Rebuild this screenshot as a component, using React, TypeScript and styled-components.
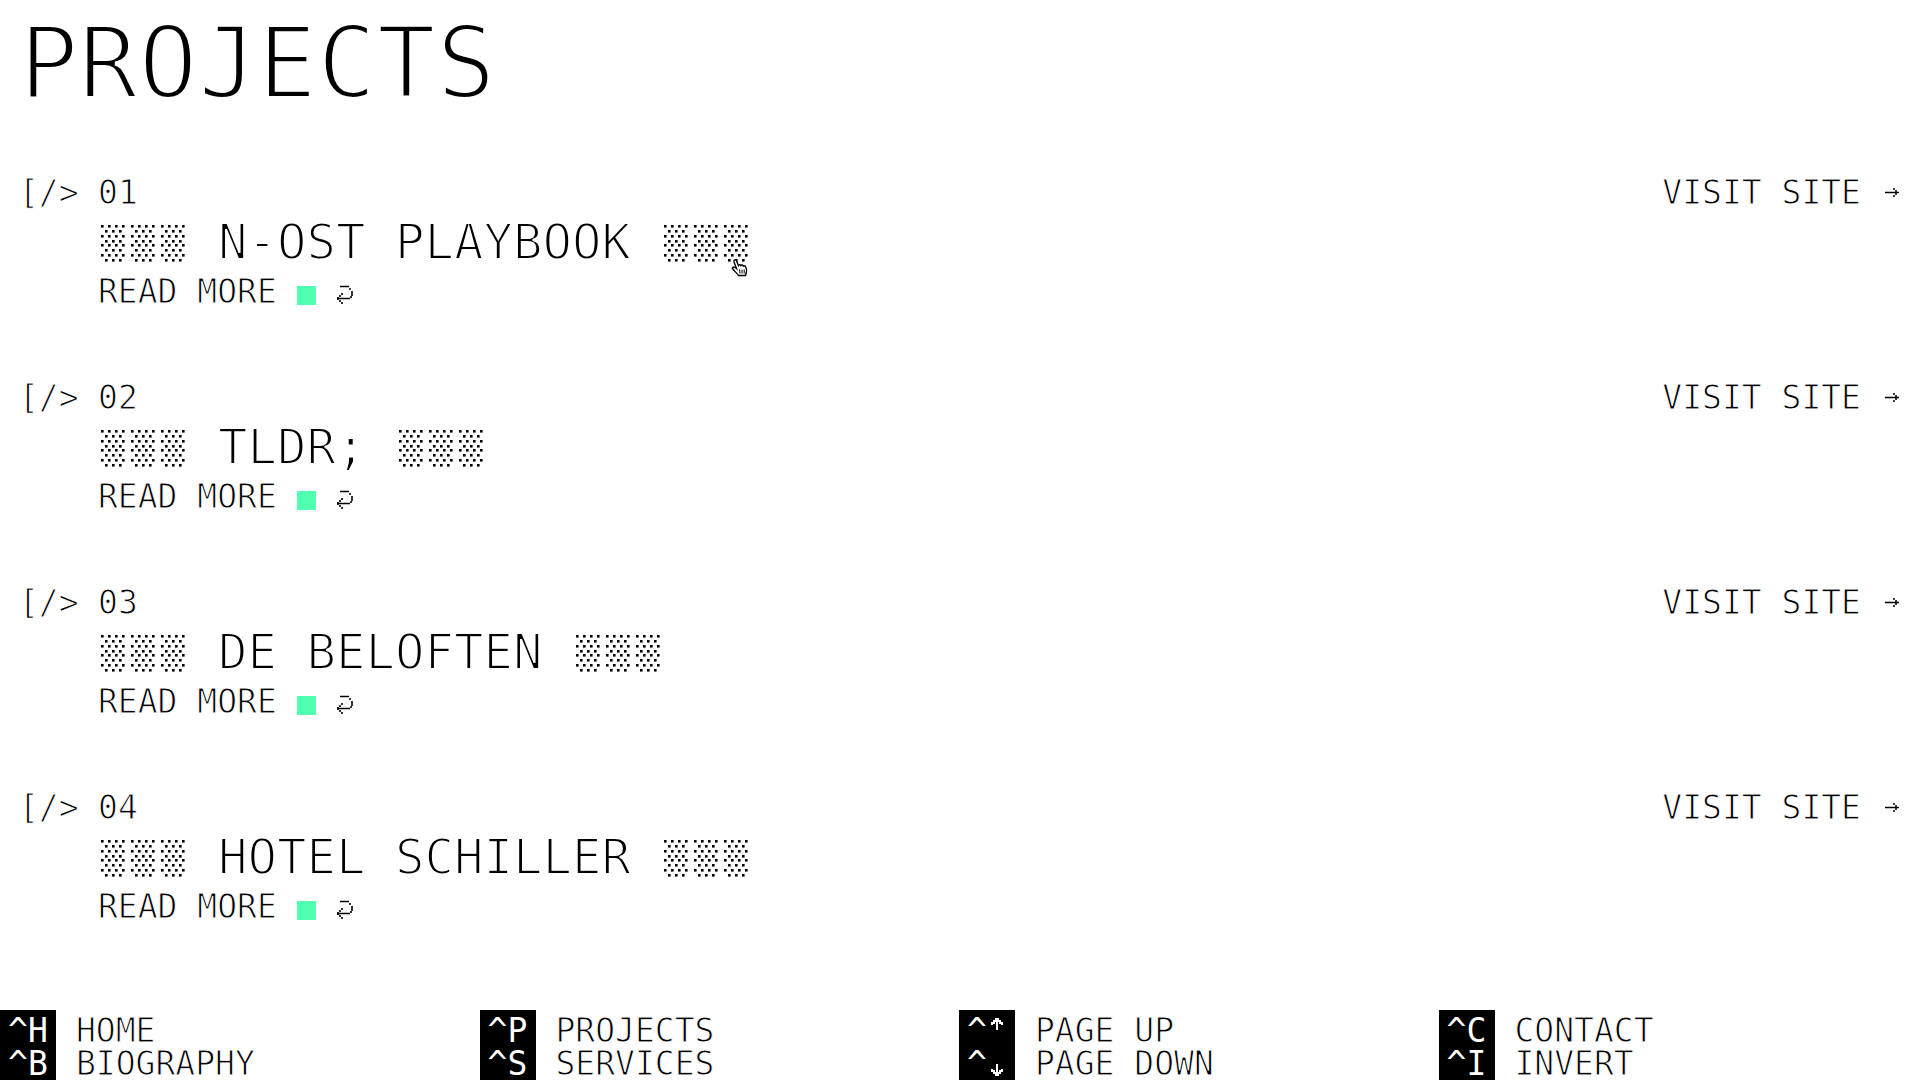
import React from "react";
import styled, { createGlobalStyle } from "styled-components";

const GlobalStyle = createGlobalStyle`
  * { box-sizing: border-box; }
  body {
    margin: 0;
    background: #fff;
    color: #000;
    font-family: "DejaVu Sans Mono", "Liberation Mono", monospace;
    font-size: 33px;
    line-height: 33px;
    text-transform: uppercase;
  }
`;

const Page = styled.div`
  min-height: 100vh;
  display: flex;
  flex-direction: column;
`;

const Main = styled.main`
  flex: 1;
  padding: 14px 17px 40px 19px;
`;

const Heading = styled.h1`
  margin: 0 0 63px;
  font-size: 99px;
  line-height: 99px;
  font-weight: 400;
  -webkit-text-stroke: 4px #fff;
`;

const ProjectList = styled.ol`
  list-style: none;
  margin: 0;
  padding: 0;
  display: flex;
  flex-direction: column;
  gap: 73px;
`;

const Project = styled.li`
  display: grid;
  grid-template-columns: 79px 1fr auto;
  align-items: start;
  -webkit-text-stroke: 1px #fff;
`;

const Body = styled.div`
  display: flex;
  flex-direction: column;
  align-items: flex-start;
`;

const PlainButton = styled.button`
  border: 0;
  padding: 0;
  background: none;
  color: inherit;
  font: inherit;
  text-transform: inherit;
  text-align: left;
  white-space: nowrap;
  cursor: pointer;
  display: flex;
`;

const Title = styled.h2`
  position: relative;
  margin: 9px 0 7px;
  font-size: 49px;
  line-height: 50px;
  font-weight: 400;
  -webkit-text-stroke: 2px #fff;
`;

const TitleButton = styled(PlainButton)`
  align-items: center;
  gap: 33px;
  padding-left: 3px;
`;

const ReadMore = styled(PlainButton)`
  align-items: center;
  gap: 20px;
`;

const Square = styled.span`
  width: 19px;
  height: 19px;
  margin-top: 7px;
  background: #50ffaf;
`;

const VisitLink = styled.a`
  display: flex;
  align-items: center;
  gap: 20px;
  color: inherit;
  text-decoration: none;
`;

const Shades = styled.span`
  display: flex;
  gap: 6px;
`;

const Drawing = styled.svg`
  display: block;
  flex: none;
`;

const Cursor = styled.svg`
  position: absolute;
  right: 0;
  bottom: -9px;
`;

const Footer = styled.footer`
  display: grid;
  grid-template-columns: repeat(4, 1fr);
`;

const Column = styled.div`
  display: flex;
  flex-direction: column;
`;

const Shortcut = styled(PlainButton)`
  align-items: stretch;
  gap: 20px;
  -webkit-text-stroke: 1px #fff;

  &:first-child > span {
    padding-top: 4px;
  }
`;

const Key = styled.span`
  display: flex;
  width: 56px;
  padding: 0 8px;
  background: #000;
  color: #fff;
  -webkit-text-stroke: 0;
`;

const Label = styled.span``;

const dots = Array.from({ length: 8 }, (_, row) =>
  Array.from({ length: row % 2 ? 3 : 4 }, (_, i) => ({
    x: (row % 2 ? 4 : 0) + i * 7,
    y: row * 5 - (row > 3 ? 1 : 0),
  })),
).flat();

const ShadeCell = () => (
  <Drawing width="24" height="37" viewBox="0 0 24 37">
    {dots.map((d) => (
      <rect key={`${d.x}-${d.y}`} x={d.x} y={d.y} width="2.6" height="2.6" />
    ))}
  </Drawing>
);

const ShadeGroup = () => (
  <Shades aria-hidden="true">
    <ShadeCell />
    <ShadeCell />
    <ShadeCell />
  </Shades>
);

const ReturnArrow = () => (
  <Drawing width="19" height="24" viewBox="0 0 19 24" fill="none" stroke="#000" strokeWidth="1.6" aria-hidden="true">
    <path d="M4 6.500h9M13 9h2M16 11v5M15 16v2M1 18.500h13M6 13v2M4 15v2M2 17v3M4 20v2M6 22v2" />
  </Drawing>
);

const RightArrow = () => (
  <Drawing width="20" height="12" viewBox="0 0 20 12" fill="none" stroke="#000" strokeWidth="1.5" aria-hidden="true">
    <path d="M4 5.500h14M13 1v2M15 3v2M15 6v2M13 8v2" />
  </Drawing>
);

const VerticalArrow = ({ down }: { down?: boolean }) => (
  <Drawing width="20" height="33" viewBox="0 0 20 33" fill="none" stroke="#fff" strokeWidth="2" aria-hidden="true">
    <path d={down ? "M10 17v11M5 22v2h2v2h2v2h2v-2h2v-2h2v-2" : "M10 16V5M5 11V9h2V7h2V5h2v2h2v2h2v2"} />
  </Drawing>
);

const Hand = () => (
  <Cursor width="17" height="19" viewBox="0 0 17 19" fill="#fff" stroke="#000" strokeWidth="1.4" aria-hidden="true">
    <path d="M5.500 10.500 3 4C2.300 1.500 4.800 1 5.500 3L7.500 7.500c.5-1.300 2-1 2.300 0 .8-1 2.200-.5 2.500.6 1-.7 2 0 2.300 1C15.800 11 16 12 15.500 13.500L14.500 17.500H7.500C6.500 15.500 3.500 13.500 1.500 10.500c-.6-1.800 1.500-2 4 0Z" />
    <path d="M8.500 11.500l.5 4M11 11.500v4M13.200 11.500v4" strokeWidth="1" />
  </Cursor>
);

const projects = ["N-ost Playbook", "TLDR;", "De Beloften", "Hotel Schiller"];

const shortcuts = [
  [["H", "Home"], ["B", "Biography"]],
  [["P", "Projects"], ["S", "Services"]],
  [["up", "Page up"], ["down", "Page down"]],
  [["C", "Contact"], ["I", "Invert"]],
];

const KeyGlyph = ({ name }: { name: string }) => {
  if (name === "up") return <VerticalArrow />;
  if (name === "down") return <VerticalArrow down />;
  return <>{name}</>;
};

export default function App() {
  return (
    <Page>
      <GlobalStyle />
      <Main>
        <Heading>Projects</Heading>
        <ProjectList>
          {projects.map((name, i) => (
            <Project key={name}>
              <span>[/&gt;</span>
              <Body>
                <span>0{i + 1}</span>
                <Title>
                  <TitleButton type="button">
                    <ShadeGroup />
                    {name}
                    <ShadeGroup />
                  </TitleButton>
                  {i === 0 && <Hand />}
                </Title>
                <ReadMore type="button">
                  Read more
                  <Square />
                  <ReturnArrow />
                </ReadMore>
              </Body>
              <VisitLink href="#">
                Visit site
                <RightArrow />
              </VisitLink>
            </Project>
          ))}
        </ProjectList>
      </Main>
      <Footer>
        {shortcuts.map((column, i) => (
          <Column key={i}>
            {column.map(([key, label]) => (
              <Shortcut type="button" key={key}>
                <Key>
                  ^<KeyGlyph name={key} />
                </Key>
                <Label>{label}</Label>
              </Shortcut>
            ))}
          </Column>
        ))}
      </Footer>
    </Page>
  );
}
